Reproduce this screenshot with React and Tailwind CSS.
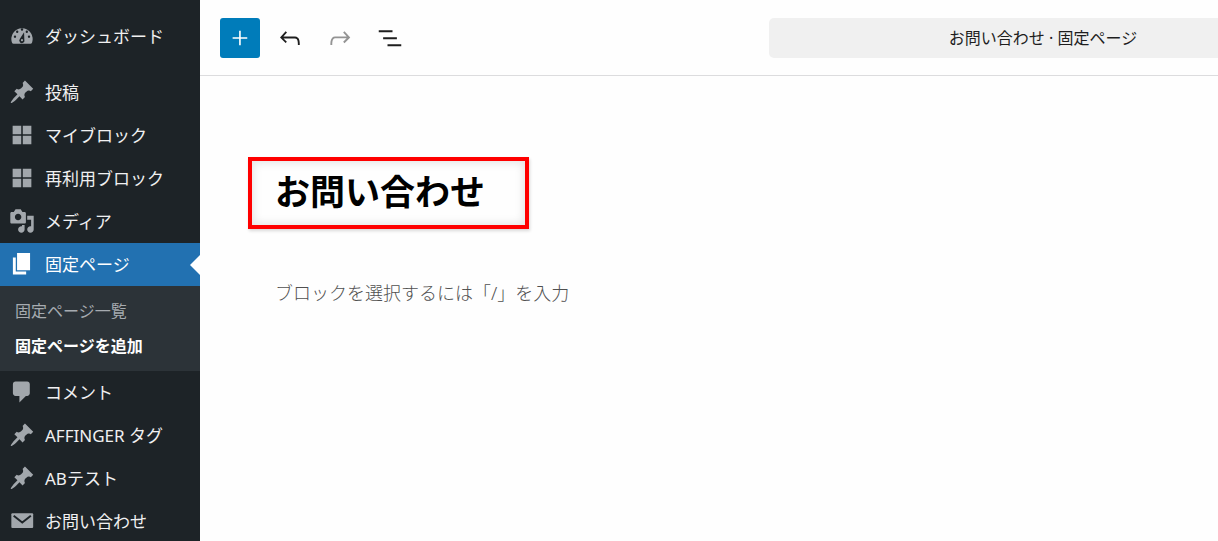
const icons = {
  pin: 'M10.44 3.02l1.82-1.82 6.36 6.35-1.83 1.82c-1.05-.68-2.48-.57-3.41.36l-.75.75c-.92.93-1.04 2.35-.35 3.41l-1.83 1.82-2.41-2.41-2.8 2.79c-.42.42-3.38 2.71-3.8 2.29s1.86-3.39 2.28-3.81l2.79-2.79L4.1 9.36l1.83-1.82c1.05.69 2.48.57 3.4-.36l.75-.75c.93-.92 1.05-2.35.36-3.41z',
  grid: 'M9.4 9.4V2.8H2.8v6.6h6.6zm7.8 0V2.8h-6.6v6.6h6.6zm-7.8 7.8v-6.6H2.8v6.6h6.6zm7.8 0v-6.6h-6.6v6.6h6.6z',
  media:
    'M13 11V4c0-.55-.45-1-1-1h-1.67L9 1H5L3.67 3H2c-.55 0-1 .45-1 1v7c0 .55.45 1 1 1h10c.55 0 1-.45 1-1zM7 4.5c1.38 0 2.5 1.12 2.5 2.5S8.38 9.5 7 9.5 4.5 8.38 4.5 7 5.62 4.5 7 4.5zM14 6h5v10.5c0 1.38-1.12 2.5-2.5 2.5S14 17.88 14 16.5s1.12-2.5 2.5-2.5c.17 0 .34.02.5.05V9h-3V6zm-4 8.05V13h2v3.5c0 1.38-1.12 2.5-2.5 2.5S7 17.88 7 16.5 8.12 14 9.5 14c.17 0 .34.02.5.05z',
  page: 'M6.2 14.8V1.6h10v13.2h-10zm-1 1h8v2.2H3V5h2.2v10.8z',
  comment: 'M5 2h9c1.1 0 2 .9 2 2v7c0 1.1-.9 2-2 2h-1l-5 5v-5H5c-1.1 0-2-.9-2-2V4c0-1.1.9-2 2-2z',
};

const menu = [
  { label: '投稿', icon: 'pin' },
  { label: 'マイブロック', icon: 'grid' },
  { label: '再利用ブロック', icon: 'grid' },
  { label: 'メディア', icon: 'media' },
  {
    label: '固定ページ',
    icon: 'page',
    current: true,
    children: [{ label: '固定ページ一覧' }, { label: '固定ページを追加', current: true }],
  },
  { label: 'コメント', icon: 'comment' },
  { label: 'AFFINGER タグ', icon: 'pin' },
  { label: 'ABテスト', icon: 'pin' },
  { label: 'お問い合わせ', icon: 'mail' },
];

function MenuIcon({ name }) {
  if (name === 'dashboard') {
    return (
      <svg viewBox="0 0 20 20" className="size-6.5" fill="currentColor" aria-hidden="true">
        <path d="M3.4 15.9a1.2 1.2 0 0 1-1-.6 8.2 8.2 0 1 1 15.2 0 1.2 1.2 0 0 1-1 .6z" />
        <g fill="#1d2327">
          <circle cx="10" cy="5" r="0.9" />
          <circle cx="6.3" cy="6.7" r="0.9" />
          <circle cx="13.7" cy="6.7" r="0.9" />
          <circle cx="4.6" cy="10.5" r="0.9" />
          <circle cx="15.4" cy="10.5" r="0.9" />
          <path d="M11.6 7.2l.2 5.6a2 2 0 1 1-3.4-.6z" />
        </g>
        <circle cx="10" cy="13.2" r="0.8" />
      </svg>
    );
  }
  if (name === 'mail') {
    return (
      <svg viewBox="0 0 20 20" className="size-6.5" aria-hidden="true">
        <rect x="1.8" y="4" width="16.8" height="11.4" rx="0.8" fill="currentColor" />
        <path d="M3.6 6l6.6 5.2 6.6-5.2" fill="none" stroke="#1d2327" strokeWidth="1.5" />
      </svg>
    );
  }
  return (
    <svg viewBox="0 0 20 20" className="size-6.5" fill="currentColor" aria-hidden="true">
      <path d={icons[name]} />
    </svg>
  );
}

function MenuItem({ label, icon, current, children }) {
  return (
    <li>
      <a
        href="#"
        className={`relative flex h-[43px] items-center ${current ? 'bg-[#2271b1] text-white' : 'text-[#f0f0f1]'}`}
      >
        <span className={`flex w-[45px] pb-px pl-[9px] ${current ? 'text-white' : 'text-[#a2a7ac]'}`}>
          <MenuIcon name={icon} />
        </span>
        {label}
        {current && (
          <span className="absolute top-1/2 right-0 -translate-y-1/2 border-y-10 border-r-10 border-y-transparent border-r-white" />
        )}
      </a>
      {children && (
        <ul className="flex flex-col gap-[3px] bg-[#2c3338] px-[15px] py-[9px] text-base/8">
          {children.map((c) => (
            <li key={c.label}>
              <a href="#" className={c.current ? 'block font-bold text-white' : 'block text-[#a6abb0]'}>
                {c.label}
              </a>
            </li>
          ))}
        </ul>
      )}
    </li>
  );
}

function ToolButton({ label, path, className = 'text-[#1e1e1e]', disabled }) {
  return (
    <button
      type="button"
      aria-label={label}
      disabled={disabled}
      className={`flex size-10 items-center justify-center rounded-[3px] ${className}`}
    >
      <svg viewBox="0 0 24 24" className="size-7.5" fill="currentColor" aria-hidden="true">
        <path d={path} />
      </svg>
    </button>
  );
}

export default function App() {
  return (
    <div className="flex h-screen overflow-hidden bg-[#fefefe] font-['Noto_Sans','Noto_Sans_CJK_JP',sans-serif]">
      <nav className="w-[200px] shrink-0 bg-[#1d2327] pt-[15px] text-[17px]">
        <ul>
          <MenuItem label="ダッシュボード" icon="dashboard" />
        </ul>
        <ul className="mt-[13px]">
          {menu.map((item) => (
            <MenuItem key={item.label} {...item} />
          ))}
        </ul>
      </nav>

      <div className="min-w-0 flex-1 overflow-hidden">
        <header className="flex h-[76px] items-center border-b border-[#dcdcde] pl-5">
          <div className="flex flex-1 gap-2.5">
            <ToolButton
              label="ブロック挿入ツールを切り替え"
              className="bg-[#007cba] text-white"
              path="M17.8 11.3h-5.2V6.1h-1.3v5.2H6.1v1.3h5.2v5.2h1.3v-5.2h5.2z"
            />
            <ToolButton
              label="元に戻す"
              path="M18.3 11.7c-.6-.6-1.4-.9-2.3-.9H6.7l2.9-3.3-1.1-1-4.5 5L8.5 16l1-1-2.7-2.7H16c.5 0 .9.2 1.3.5 1 1 1 3.4 1 4.5v.3h1.5v-.2c0-1.5 0-4.3-1.5-5.7z"
            />
            <ToolButton
              label="やり直す"
              disabled
              className="text-[#949494]"
              path="M15.6 6.5l-1.1 1 2.9 3.3H8c-.9 0-1.7.3-2.3.9-1.4 1.5-1.4 4.2-1.4 5.6v.2h1.5v-.3c0-1.1 0-3.5 1-4.5.3-.3.7-.5 1.3-.5h9.2L14.5 15l1.1 1.1 4.6-4.6-4.6-5z"
            />
            <ToolButton
              label="リスト表示"
              path="M3 5.8h11v1.6H3V5.8Zm3.5 5.6h11V13h-11v-1.6ZM21 17H10v1.6h11V17Z"
            />
          </div>
          {/* Command bar runs past the right edge */}
          <button
            type="button"
            className="-mr-[99px] h-10 w-[548px] shrink-0 rounded-[5px] bg-[#f0f0f0] text-base text-[#1e1e1e]"
          >
            お問い合わせ · 固定ページ
          </button>
        </header>

        <main className="px-12 pt-[81px]">
          <div className="flex h-[72px] w-[281px] items-center border-4 border-[#ff0000] pb-0.5 pl-[23px] shadow-[inset_0_0_8px_2px_#0000001a,1px_2px_3px_#00000026]">
            <input
              aria-label="タイトルを追加"
              defaultValue="お問い合わせ"
              className="w-full text-[35px]/[52px] font-bold text-black outline-none"
            />
          </div>
          <input
            aria-label="ブロック"
            placeholder="ブロックを選択するには「/」を入力"
            className="mt-12 ml-[27px] block w-80 text-lg/8 font-light outline-none placeholder:text-[#505050]"
          />
        </main>
      </div>
    </div>
  );
}
